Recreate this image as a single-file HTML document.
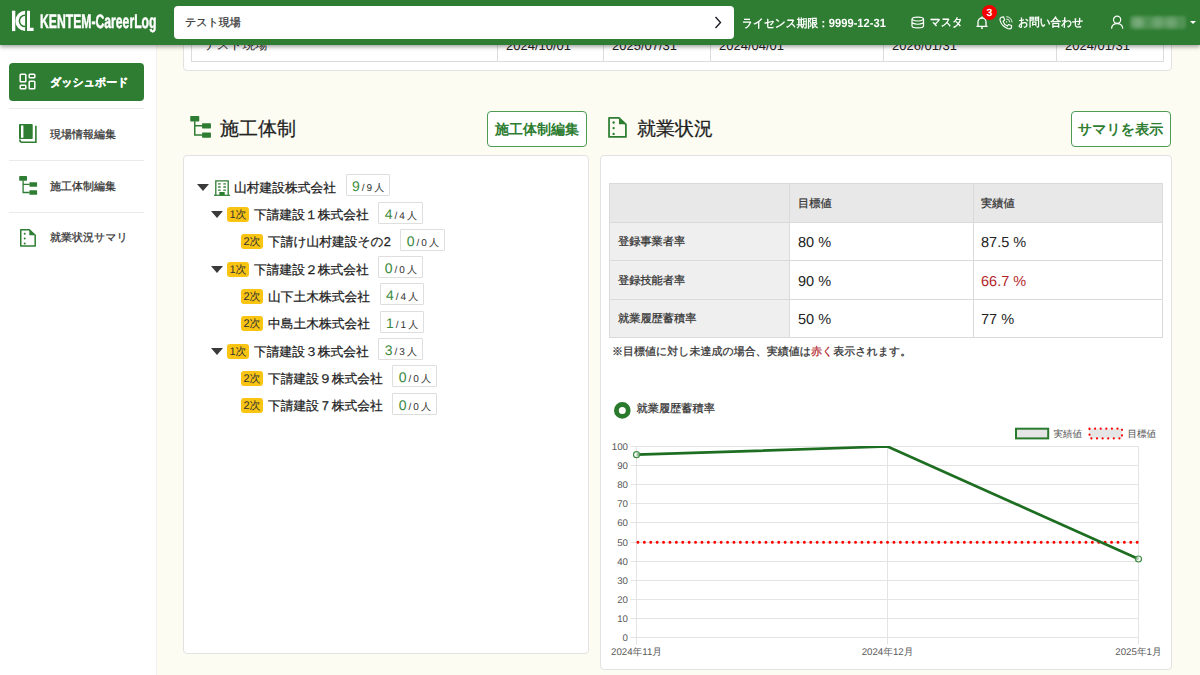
<!DOCTYPE html>
<html lang="ja">
<head>
<meta charset="utf-8">
<style>
*{box-sizing:border-box;margin:0;padding:0}
html,body{width:1200px;height:675px;overflow:hidden}
body{font-family:"Liberation Sans",sans-serif;text-rendering:geometricPrecision;background:#fcfcf2;color:#333;position:relative}
.abs{position:absolute}
svg{position:absolute;overflow:visible}
/* header */
#hdr{position:absolute;left:0;top:0;width:1200px;height:44.7px;background:#2e7d32;box-shadow:0 2px 4px rgba(0,0,0,.35);z-index:10;color:#fff}
#search{position:absolute;left:174px;top:6px;width:560px;height:33px;background:#fff;border-radius:4px}
#search .t{position:absolute;left:11px;top:10px;font-size:11px;line-height:14px;color:#333;white-space:nowrap}
.hw{position:absolute;top:16px;font-size:11.5px;line-height:14px;transform-origin:0 0;transform:scaleX(0.93);font-weight:bold;color:#fff;white-space:nowrap}
/* sidebar */
#side{position:absolute;left:0;top:44px;width:157px;height:631px;background:#fff;border-right:1px solid #f1f1f1}
.mi{position:absolute;left:9px;width:135px;height:38px}
.mi .tx{position:absolute;left:41px;top:13.5px;font-size:11px;line-height:13px;color:#333;white-space:nowrap}
.mi.act{background:#2e7d32;border-radius:4px}
.mi.act .tx{color:#fff;font-weight:bold}
.dv{position:absolute;left:9px;width:135px;height:1px;background:#eaeaea}
/* cards */
.card{position:absolute;background:#fff;border:1px solid #e2e2e2;border-radius:4px}
.ttl{position:absolute;font-size:19px;line-height:22px;color:#222;white-space:nowrap}
.btn{position:absolute;width:100px;height:36px;border:1px solid #4f9a52;border-radius:4px;background:#fff;color:#2e7d32;font-weight:bold;font-size:14px;text-align:center;line-height:35px;white-space:nowrap}
/* tree */
.row{position:absolute;height:22px;white-space:nowrap;display:flex;align-items:center}
.tri{display:block;width:0;height:0;border-left:6px solid transparent;border-right:6px solid transparent;border-top:7px solid #3a3a3a;margin-right:4px;position:relative;top:2px}
.bld{position:relative;display:block;margin-right:5px;top:2.5px;left:1px}
.bdg{display:block;width:22px;height:15px;background:#f9c412;border-radius:3px;font-size:11px;line-height:17px;text-align:center;color:#333;margin-right:5px;position:relative;top:2px}
.nm{display:block;font-size:12.75px;line-height:15px;color:#222;margin-right:9.5px;position:relative;top:2px}
.cnt{display:block;height:22px;border:1px solid #dedede;border-radius:1px;background:#fff;padding:0 5px 0 5.5px;line-height:21px;white-space:nowrap}
.cnt b{font-weight:normal;color:#3a8a3e;font-size:14px;position:relative;top:1px}
.cnt i{font-style:normal;font-size:10px;color:#333;position:relative;top:1px}
.cnt i.sl{margin-left:2px}
.cnt i.sm{margin-left:2px}
.cnt i.pp{margin-left:2px}
/* table */
#tbl{position:absolute;left:609px;top:183px;border-collapse:collapse;font-size:12px;color:#333}
#tbl td{border:1px solid #dadada;height:38px;padding:0 0 0 8px;vertical-align:middle}
#tbl tr:first-child td{background:#e8e8e8}
#tbl td.lb{background:#efefef;width:180px}
#tbl td.v{font-size:15px;width:184px}
#tbl td.v2{font-size:15px;width:191px}
.red,.tv.red,.tc .red{color:#b3262b}
.tc,.nm,.mi .tx,.ttl,#search .t{-webkit-text-stroke:0.25px currentColor}
.tc{position:absolute;font-size:11.2px;line-height:14px;color:#333;white-space:nowrap}
.tv{position:absolute;font-size:14.5px;line-height:17px;color:#222;white-space:nowrap}
</style>
</head>
<body>

<!-- top card (scrolled) -->
<div class="card" style="left:183px;top:-20px;width:989px;height:91px"></div>
<div class="abs" style="left:191px;top:-10px;width:973px;height:72px;border:1px solid #dcdcdc;background:#fff"></div>
<div class="abs" style="left:497px;top:-10px;width:1px;height:72px;background:#dcdcdc"></div>
<div class="abs" style="left:603px;top:-10px;width:1px;height:72px;background:#dcdcdc"></div>
<div class="abs" style="left:710px;top:-10px;width:1px;height:72px;background:#dcdcdc"></div>
<div class="abs" style="left:883px;top:-10px;width:1px;height:72px;background:#dcdcdc"></div>
<div class="abs" style="left:1056px;top:-10px;width:1px;height:72px;background:#dcdcdc"></div>
<div class="abs" style="left:204px;top:38px;font-size:12.5px;line-height:14px;color:#222">テスト現場</div>
<div class="abs" style="left:506px;top:38px;font-size:13px;line-height:15px;color:#222">2024/10/01</div>
<div class="abs" style="left:612px;top:38px;font-size:13px;line-height:15px;color:#222">2025/07/31</div>
<div class="abs" style="left:719px;top:38px;font-size:13px;line-height:15px;color:#222">2024/04/01</div>
<div class="abs" style="left:892px;top:38px;font-size:13px;line-height:15px;color:#222">2026/01/31</div>
<div class="abs" style="left:1065px;top:38px;font-size:13px;line-height:15px;color:#222">2024/01/31</div>

<!-- header -->
<div id="hdr">
  <svg style="left:12px;top:10px" width="22" height="22" viewBox="0 0 22 22">
    <rect x="0" y="0.7" width="3.3" height="20.4" fill="#fff"/>
    <path d="M13.1 0.7 A9.7 10.2 0 0 0 13.1 21.1 Z" fill="#fff"/>
    <path d="M13.1 5.2 A5.7 5.7 0 0 0 13.1 16.6" fill="none" stroke="#2e7d32" stroke-width="1.5"/>
    <path d="M15 0.7 H18 V17.8 H21.6 V21.1 H15 Z" fill="#fff"/>
  </svg>
  <div class="hw" id="logo" style="left:40px;top:11.2px;font-size:19.5px;line-height:22px;-webkit-text-stroke:0.5px #fff;transform-origin:0 0;transform:scaleX(0.625)">KENTEM-CareerLog</div>
  <div id="search"><div class="t">テスト現場</div>
    <svg style="left:540.3px;top:10px" width="8" height="13" viewBox="0 0 8 13"><path d="M1.5 1 L6.5 6.5 L1.5 12" fill="none" stroke="#1e1e28" stroke-width="1.4"/></svg>
  </div>
  <div class="hw" style="left:742px">ライセンス期限：<span style="font-size:12px">9999-12-31</span></div>
  <svg style="left:911px;top:16px" width="14" height="13" viewBox="0 0 14 13">
    <path d="M1 3.2 Q1 1.1 6.75 1.1 Q12.5 1.1 12.5 3.2 V10 Q12.5 11.9 6.75 11.9 Q1 11.9 1 10 Z" fill="none" stroke="#fff" stroke-width="1.25"/>
    <path d="M1 3.4 Q6.75 6.6 12.5 3.4 M1 6.9 Q6.75 9.6 12.5 6.9" fill="none" stroke="#fff" stroke-width="1.2"/>
  </svg>
  <div class="hw" style="left:930px">マスタ</div>
  <svg style="left:976px;top:16px" width="12" height="13" viewBox="0 0 12 13">
    <path d="M2 10 V6 A4 4 0 0 1 10 6 V10 M0.5 10.3 H11.5 M5 12 H7" fill="none" stroke="#fff" stroke-width="1.3"/>
    <path d="M6 0.5 V2" stroke="#fff" stroke-width="1.3"/>
  </svg>
  <div class="abs" style="left:981.8px;top:5.2px;width:15px;height:15px;border-radius:50%;background:#f40000;color:#fff;font-weight:bold;font-size:10.5px;line-height:17px;text-align:center">3</div>
  <svg style="left:999.3px;top:16.2px" width="14" height="14" viewBox="0 0 14 14">
    <path d="M2.2 1.2 L4.6 0.9 L5.7 4.1 L4.1 5.3 Q5 8.6 8.3 10.1 L9.4 8.5 L12.6 9.5 L12.4 12 Q11.3 13.1 9.2 12.7 Q2.6 10.6 1 4.2 Q0.7 2.1 2.2 1.2 Z" fill="none" stroke="#fff" stroke-width="1.15" stroke-linejoin="round"/>
    <path d="M7.3 0.7 A5.8 5.8 0 0 1 13 6.4 M7.3 3 A3.4 3.4 0 0 1 10.7 6.4" fill="none" stroke="#fff" stroke-width="0.9"/>
    <circle cx="7.6" cy="5.9" r="0.7" fill="#fff"/>
  </svg>
  <div class="hw" style="left:1018px">お問い合わせ</div>
  <svg style="left:1111px;top:16px" width="13" height="13" viewBox="0 0 13 13">
    <circle cx="6.1" cy="3.8" r="3.6" fill="none" stroke="#fff" stroke-width="1.2"/>
    <path d="M0.5 12.6 Q1 7.6 6.1 7.6 Q11.3 7.6 11.8 12.6" fill="none" stroke="#fff" stroke-width="1.2"/>
  </svg>
  <div class="abs" style="left:1130px;top:16px;width:56px;height:13px;border-radius:3px;background:rgba(255,255,255,.17);filter:blur(1.5px)"></div>
  <div class="abs" style="left:1132px;top:17px;width:12px;height:11px;border-radius:50%;background:rgba(255,255,255,.22);filter:blur(2px)"></div>
  <div class="abs" style="left:1152px;top:17px;width:12px;height:11px;border-radius:50%;background:rgba(255,255,255,.17);filter:blur(2px)"></div>
  <div class="abs" style="left:1165px;top:17px;width:12px;height:11px;border-radius:50%;background:rgba(255,255,255,.17);filter:blur(2px)"></div>
  <div class="abs" style="left:1189.7px;top:20.5px;width:0;height:0;border-left:3.3px solid transparent;border-right:3.3px solid transparent;border-top:3.7px solid #fff"></div>
</div>

<!-- sidebar -->
<div id="side">
  <div class="mi act" style="top:19px"><div class="tx">ダッシュボード</div>
    <svg style="left:10px;top:10px" width="17" height="17" viewBox="0 0 17 17">
      <g fill="none" stroke="#fff" stroke-width="1.5">
      <rect x="1.2" y="1.2" width="5.6" height="7.6" rx="0.8"/>
      <rect x="10.2" y="1.2" width="5.6" height="3.6" rx="0.8"/>
      <rect x="1.2" y="12.2" width="5.6" height="3.6" rx="0.8"/>
      <rect x="10.2" y="8.2" width="5.6" height="7.6" rx="0.8"/>
      </g>
    </svg>
  </div>
  <div class="dv" style="top:64px"></div>
  <div class="mi" style="top:71px"><div class="tx">現場情報編集</div>
    <svg style="left:10px;top:9px" width="18" height="19" viewBox="0 0 18 19">
      <rect x="0" y="0" width="13.7" height="15" rx="0.8" fill="#2e7d32"/>
      <rect x="2" y="1.5" width="2.4" height="12.3" fill="#fff"/>
      <path d="M16.9 1.8 V18.2 H3 Q0.8 18.2 0.8 15.5" fill="none" stroke="#2e7d32" stroke-width="1.6"/>
    </svg>
  </div>
  <div class="dv" style="top:116px"></div>
  <div class="mi" style="top:123px"><div class="tx">施工体制編集</div>
    <svg style="left:9.5px;top:9px" width="19" height="19" viewBox="0 0 19 19">
      <rect x="0.2" y="0.1" width="7.8" height="4.6" rx="0.6" fill="#2e7d32"/>
      <rect x="10.4" y="6.2" width="7.7" height="4.5" rx="0.6" fill="#2e7d32"/>
      <rect x="10.4" y="14.3" width="7.7" height="4.5" rx="0.6" fill="#2e7d32"/>
      <path d="M4.1 4.5 V16.5 H10.5 M4.1 8.4 H10.5" fill="none" stroke="#2e7d32" stroke-width="1.3"/>
    </svg>
  </div>
  <div class="dv" style="top:168px"></div>
  <div class="mi" style="top:174px"><div class="tx">就業状況サマリ</div>
    <svg style="left:10.8px;top:10.8px" width="16" height="18" viewBox="0 0 16 18">
      <path d="M0.75 0.75 H9.3 L15.2 6.3 V17.1 H0.75 Z" fill="none" stroke="#2e7d32" stroke-width="1.5" stroke-linejoin="round"/>
      <path d="M9.3 0.8 V6.3 H15.2 Z" fill="#2e7d32"/>
      <circle cx="4.7" cy="4.7" r="1" fill="#2e7d32"/><circle cx="4.7" cy="9.5" r="1" fill="#2e7d32"/><circle cx="4.7" cy="14.5" r="1" fill="#2e7d32"/>
    </svg>
  </div>
</div>

<!-- section titles -->
<svg style="left:190px;top:116px" width="22" height="22" viewBox="0 0 19 19">
  <rect x="0.2" y="0.1" width="7.8" height="4.6" rx="0.6" fill="#2e7d32"/>
  <rect x="10.4" y="6.2" width="7.7" height="4.5" rx="0.6" fill="#2e7d32"/>
  <rect x="10.4" y="14.3" width="7.7" height="4.5" rx="0.6" fill="#2e7d32"/>
  <path d="M4.1 4.5 V16.5 H10.5 M4.1 8.4 H10.5" fill="none" stroke="#2e7d32" stroke-width="1.3"/>
</svg>
<div class="ttl" style="left:220px;top:118.5px">施工体制</div>
<div class="btn" style="left:487px;top:111px">施工体制編集</div>
<svg style="left:608px;top:116.5px" width="19" height="21" viewBox="0 0 16 18">
  <path d="M0.75 0.75 H9.3 L15.2 6.3 V17.1 H0.75 Z" fill="none" stroke="#2e7d32" stroke-width="1.5" stroke-linejoin="round"/>
  <path d="M9.3 0.8 V6.3 H15.2 Z" fill="#2e7d32"/>
  <circle cx="4.7" cy="4.7" r="1" fill="#2e7d32"/><circle cx="4.7" cy="9.5" r="1" fill="#2e7d32"/><circle cx="4.7" cy="14.5" r="1" fill="#2e7d32"/>
</svg>
<div class="ttl" style="left:637px;top:118.5px">就業状況</div>
<div class="btn" style="left:1070.5px;top:111px">サマリを表示</div>

<!-- left card: tree -->
<div class="card" style="left:183px;top:155px;width:406px;height:499px"></div>
<div id="tree">
<div class="row l0" style="left:197px;top:174.25px"><span class="tri"></span><svg class="bld" width="16" height="16" viewBox="0 0 16 16"><path d="M1.8 15.2 V0.8 H14.2 V15.2" fill="none" stroke="#2e7d32" stroke-width="1.3"/><path d="M0 15.3 H16" stroke="#2e7d32" stroke-width="1.2"/><g fill="#2e7d32"><rect x="4" y="3.2" width="2.8" height="1.4" rx=".6"/><rect x="9.2" y="3.2" width="2.8" height="1.4" rx=".6"/><rect x="4" y="6.3" width="2.8" height="1.4" rx=".6"/><rect x="9.2" y="6.3" width="2.8" height="1.4" rx=".6"/><rect x="4" y="9.4" width="2.8" height="1.4" rx=".6"/><rect x="9.2" y="9.4" width="2.8" height="1.4" rx=".6"/><rect x="5.3" y="12" width="5.4" height="3.2"/></g></svg><span class="nm">山村建設株式会社</span><span class="cnt"><b>9</b><i class="sl">/</i><i class="sm">9</i><i class="pp">人</i></span></div>
<div class="row l1" style="left:211px;top:201.55px"><span class="tri"></span><span class="bdg">1次</span><span class="nm">下請建設１株式会社</span><span class="cnt"><b>4</b><i class="sl">/</i><i class="sm">4</i><i class="pp">人</i></span></div>
<div class="row l2" style="left:241px;top:228.85px"><span class="bdg">2次</span><span class="nm">下請け山村建設その2</span><span class="cnt"><b>0</b><i class="sl">/</i><i class="sm">0</i><i class="pp">人</i></span></div>
<div class="row l1" style="left:211px;top:256.15px"><span class="tri"></span><span class="bdg">1次</span><span class="nm">下請建設２株式会社</span><span class="cnt"><b>0</b><i class="sl">/</i><i class="sm">0</i><i class="pp">人</i></span></div>
<div class="row l2" style="left:241px;top:283.45px"><span class="bdg">2次</span><span class="nm">山下土木株式会社</span><span class="cnt"><b>4</b><i class="sl">/</i><i class="sm">4</i><i class="pp">人</i></span></div>
<div class="row l2" style="left:241px;top:310.75px"><span class="bdg">2次</span><span class="nm">中島土木株式会社</span><span class="cnt"><b>1</b><i class="sl">/</i><i class="sm">1</i><i class="pp">人</i></span></div>
<div class="row l1" style="left:211px;top:338.05px"><span class="tri"></span><span class="bdg">1次</span><span class="nm">下請建設３株式会社</span><span class="cnt"><b>3</b><i class="sl">/</i><i class="sm">3</i><i class="pp">人</i></span></div>
<div class="row l2" style="left:241px;top:365.35px"><span class="bdg">2次</span><span class="nm">下請建設９株式会社</span><span class="cnt"><b>0</b><i class="sl">/</i><i class="sm">0</i><i class="pp">人</i></span></div>
<div class="row l2" style="left:241px;top:392.65px"><span class="bdg">2次</span><span class="nm">下請建設７株式会社</span><span class="cnt"><b>0</b><i class="sl">/</i><i class="sm">0</i><i class="pp">人</i></span></div>
</div>

<!-- right card -->
<div class="card" style="left:600px;top:155px;width:572px;height:515px"></div>
<div class="abs" style="left:609px;top:183px;width:554px;height:155px;border:1px solid #dadada;background:#fff"></div>
<div class="abs" style="left:610px;top:184px;width:552px;height:38px;background:#e8e8e8"></div>
<div class="abs" style="left:610px;top:222px;width:179px;height:115px;background:#efefef"></div>
<div class="abs" style="left:610px;top:222px;width:552px;height:1px;background:#dadada"></div>
<div class="abs" style="left:610px;top:260px;width:552px;height:1px;background:#dadada"></div>
<div class="abs" style="left:610px;top:299px;width:552px;height:1px;background:#dadada"></div>
<div class="abs" style="left:789px;top:184px;width:1px;height:153px;background:#dadada"></div>
<div class="abs" style="left:973px;top:184px;width:1px;height:153px;background:#dadada"></div>
<div class="tc" style="left:798px;top:197px">目標値</div>
<div class="tc" style="left:981px;top:197px">実績値</div>
<div class="tc" style="left:618px;top:235px">登録事業者率</div>
<div class="tc" style="left:618px;top:274px">登録技能者率</div>
<div class="tc" style="left:618px;top:312px">就業履歴蓄積率</div>
<div class="tv" style="left:798px;top:234.5px">80 %</div>
<div class="tv" style="left:981px;top:234.5px">87.5 %</div>
<div class="tv" style="left:798px;top:273.5px">90 %</div>
<div class="tv red" style="left:981px;top:273.5px">66.7 %</div>
<div class="tv" style="left:798px;top:311.5px">50 %</div>
<div class="tv" style="left:981px;top:311.5px">77 %</div>
<div class="tc" style="left:612px;top:344.5px;font-size:11px">※目標値に対し未達成の場合、実績値は<span class="red">赤く</span>表示されます。</div>
<div class="tc" style="left:636.5px;top:402px">就業履歴蓄積率</div>
<svg style="left:0;top:0" width="1200" height="675" viewBox="0 0 1200 675">
<defs><clipPath id="ca"><rect x="630" y="446.0" width="520" height="200"/></clipPath></defs>
<g font-family="Liberation Sans, sans-serif" font-size="9.7" fill="#5a5a5a">
<path d="M630.5 637.5 H1138.5" stroke="#e4e4e4" stroke-width="1"/>
<text x="628" y="640.5" text-anchor="end">0</text>
<path d="M630.5 618.5 H1138.5" stroke="#e4e4e4" stroke-width="1"/>
<text x="628" y="621.5" text-anchor="end">10</text>
<path d="M630.5 599.5 H1138.5" stroke="#e4e4e4" stroke-width="1"/>
<text x="628" y="602.5" text-anchor="end">20</text>
<path d="M630.5 580.5 H1138.5" stroke="#e4e4e4" stroke-width="1"/>
<text x="628" y="583.5" text-anchor="end">30</text>
<path d="M630.5 561.5 H1138.5" stroke="#e4e4e4" stroke-width="1"/>
<text x="628" y="564.5" text-anchor="end">40</text>
<path d="M630.5 542.5 H1138.5" stroke="#e4e4e4" stroke-width="1"/>
<text x="628" y="545.5" text-anchor="end">50</text>
<path d="M630.5 522.5 H1138.5" stroke="#e4e4e4" stroke-width="1"/>
<text x="628" y="525.5" text-anchor="end">60</text>
<path d="M630.5 503.5 H1138.5" stroke="#e4e4e4" stroke-width="1"/>
<text x="628" y="506.5" text-anchor="end">70</text>
<path d="M630.5 484.5 H1138.5" stroke="#e4e4e4" stroke-width="1"/>
<text x="628" y="487.5" text-anchor="end">80</text>
<path d="M630.5 465.5 H1138.5" stroke="#e4e4e4" stroke-width="1"/>
<text x="628" y="468.5" text-anchor="end">90</text>
<path d="M630.5 446.5 H1138.5" stroke="#e4e4e4" stroke-width="1"/>
<text x="628" y="449.5" text-anchor="end">100</text>
<path d="M636.5 446.5 V644.2" stroke="#e4e4e4" stroke-width="1"/>
<path d="M887.5 446.5 V644.2" stroke="#e4e4e4" stroke-width="1"/>
<path d="M1138.5 446.5 V644.2" stroke="#e4e4e4" stroke-width="1"/>
<text x="636.5" y="655.3" text-anchor="middle">2024年11月</text>
<text x="887.5" y="655.3" text-anchor="middle">2024年12月</text>
<text x="1138.5" y="655.3" text-anchor="middle">2025年1月</text>
</g>
<path d="M637.95 542.25 H1139.5" stroke="#f00" stroke-width="3" stroke-dasharray="0 6.4" stroke-linecap="round"/>
<g clip-path="url(#ca)"><path d="M636.5 454.7 L887.5 446.5 L1138.5 559.0" fill="none" stroke="#1e6e22" stroke-width="2.7" stroke-linejoin="round"/></g>
<circle cx="636.5" cy="454.7" r="3" fill="rgba(255,255,255,.6)" stroke="#3f8d43" stroke-width="1.2"/>
<circle cx="1138.5" cy="559" r="3" fill="rgba(255,255,255,.6)" stroke="#3f8d43" stroke-width="1.2"/>
<circle cx="622.3" cy="410.4" r="5.9" fill="none" stroke="#2a7a2e" stroke-width="4.8"/>
<rect x="1016" y="428.7" width="32.2" height="9.7" fill="#e5e5e5" stroke="#2a7a2e" stroke-width="2"/>
<rect x="1089.5" y="428.7" width="32.5" height="9.7" fill="#e5e5e5"/>
<rect x="1089.5" y="428.7" width="32.5" height="9.7" fill="none" stroke="#f00" stroke-width="2.2" stroke-dasharray="0 5.6" stroke-linecap="round"/>
<g font-family="Liberation Sans, sans-serif" font-size="9.5" fill="#4a4a4a">
<text x="1053.5" y="437">実績値</text><text x="1127.5" y="437">目標値</text>
</g>
</svg>

</body>
</html>
